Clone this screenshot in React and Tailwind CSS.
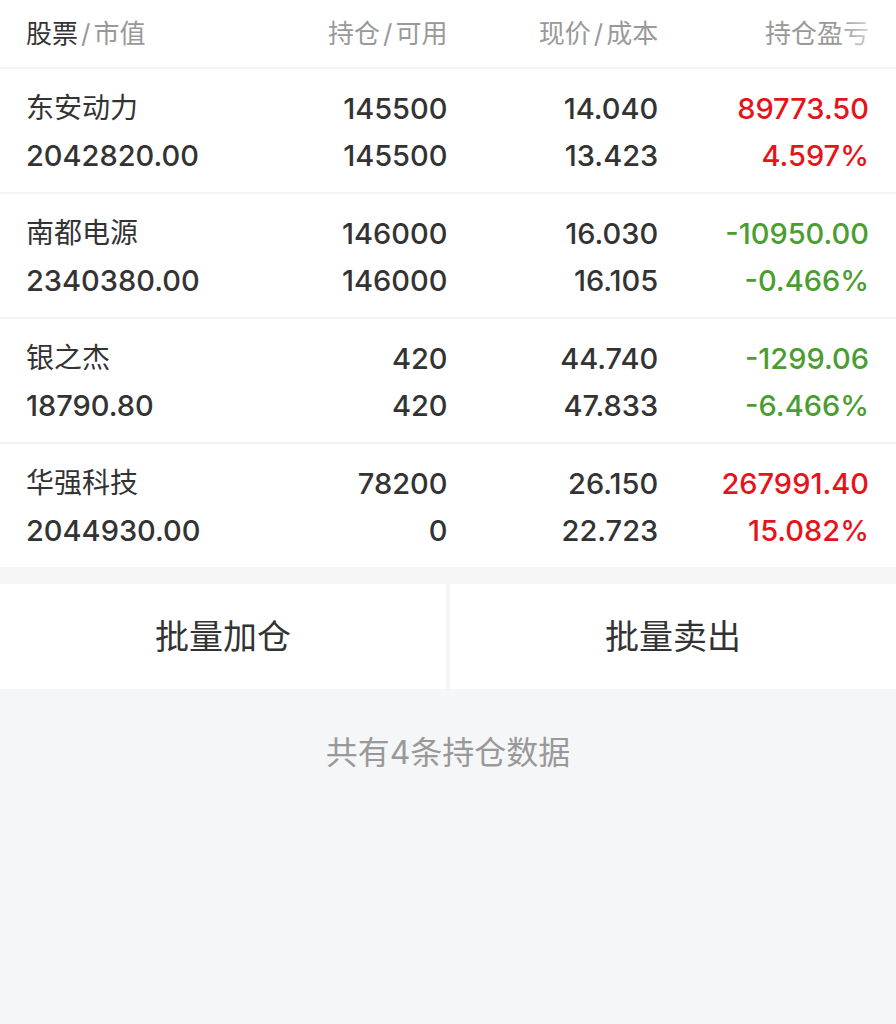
const rows = [
  { name: '东安动力', value: '2042820.00', hold: '145500', avail: '145500', price: '14.040', cost: '13.423', pnl: '89773.50', pct: '4.597%', up: true },
  { name: '南都电源', value: '2340380.00', hold: '146000', avail: '146000', price: '16.030', cost: '16.105', pnl: '-10950.00', pct: '-0.466%', up: false },
  { name: '银之杰', value: '18790.80', hold: '420', avail: '420', price: '44.740', cost: '47.833', pnl: '-1299.06', pct: '-6.466%', up: false },
  { name: '华强科技', value: '2044930.00', hold: '78200', avail: '0', price: '26.150', cost: '22.723', pnl: '267991.40', pct: '15.082%', up: true },
];

const font = { fontFamily: 'Inter, "Noto Sans CJK SC", sans-serif' };

export default function App() {
  return (
    <div className="min-h-[1024px] bg-[#f5f6f8]" style={font}>
      {/* Header */}
      <div className="relative grid grid-cols-4 h-[69px] items-center bg-white pl-[26px] pr-[27px] text-[26px] text-[#999] border-b-2 border-[#f3f3f3]">
        <div>
          <span className="text-[#333]">股票</span>
          <span className="mx-[3px]">/</span>市值
        </div>
        <div className="text-right">持仓<span className="mx-[3px]">/</span>可用</div>
        <div className="text-right">现价<span className="mx-[3px]">/</span>成本</div>
        <div className="text-right">持仓盈亏</div>
        <div className="absolute right-0 top-0 h-full w-[60px] bg-gradient-to-r from-white/0 to-white" />
      </div>

      {/* Rows */}
      <div className="bg-white">
        {rows.map((r, i) => (
          <div
            key={r.name}
            className={`grid grid-cols-4 pl-[26px] pr-[27px] pt-[16px] pb-[13px] leading-[47px] text-[#333] font-medium ${i < rows.length - 1 ? 'border-b-2 border-[#f3f3f3]' : ''}`}
          >
            <div>
              <div className="text-[28px] font-normal">{r.name}</div>
              <div className="text-[29px]">{r.value}</div>
            </div>
            <div className="text-right text-[29px]">
              <div>{r.hold}</div>
              <div>{r.avail}</div>
            </div>
            <div className="text-right text-[29px]">
              <div>{r.price}</div>
              <div>{r.cost}</div>
            </div>
            <div className={`text-right text-[29px] ${r.up ? 'text-[#e8131a]' : 'text-[#4a9d2f]'}`}>
              <div>{r.pnl}</div>
              <div>{r.pct}</div>
            </div>
          </div>
        ))}
      </div>

      {/* Actions */}
      <div className="mt-[17px] flex gap-[4px]">
        <button className="flex-1 h-[105px] bg-white text-[34px] text-[#333]">批量加仓</button>
        <button className="flex-1 h-[105px] bg-white text-[34px] text-[#333]">批量卖出</button>
      </div>

      <div className="pt-[40px] text-center text-[32px] text-[#999]">共有4条持仓数据</div>
    </div>
  );
}
